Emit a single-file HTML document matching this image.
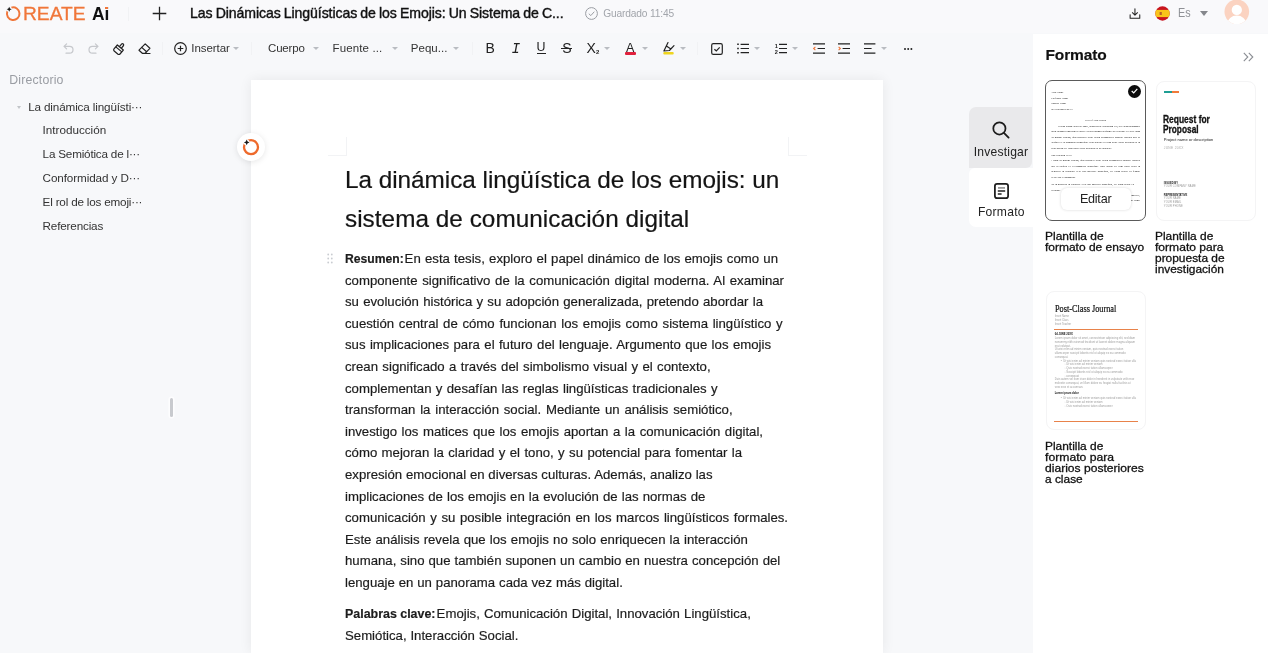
<!DOCTYPE html>
<html lang="es">
<head>
<meta charset="utf-8">
<title>Oreate AI</title>
<style>
*{box-sizing:border-box;margin:0;padding:0}
html,body{width:1268px;height:653px;overflow:hidden;background:#f7f8fa;will-change:transform;font-family:"Liberation Sans","Noto Sans CJK SC",sans-serif;color:#1a1a1a}
.abs{position:absolute}
.t{position:absolute;white-space:nowrap;line-height:1}
#page{position:absolute;left:251px;top:80px;width:632px;height:573px;background:#fff;box-shadow:0 0 12px rgba(0,0,0,.07)}
#right{position:absolute;left:1032.6px;top:34px;width:235.4px;height:619px;background:#fff}
.ln{position:absolute;left:345px;white-space:nowrap;font-size:13.2px;line-height:22px;height:22px;color:#1c1c1c;-webkit-text-stroke:.18px #1c1c1c}
.h1{position:absolute;left:345px;white-space:nowrap;font-size:24.3px;line-height:39px;height:39px;color:#141414;-webkit-text-stroke:.2px #141414}
.dir{position:absolute;white-space:nowrap;font-size:11.7px;line-height:16px;color:#333}
.tb{position:absolute;white-space:nowrap;font-size:11.5px;line-height:16px;color:#333;top:40px}
.cap{position:absolute;white-space:nowrap;font-size:10.8px;line-height:11px;color:#111;-webkit-text-stroke:.28px #111}
.j{text-align:justify;text-align-last:justify;height:22px;line-height:22px;overflow:hidden}
.thumb{position:absolute;left:0;top:0;width:400px;height:560px;transform:scale(.25);transform-origin:0 0}
svg{position:absolute;overflow:visible}
.ic{font-size:14px;top:40px;color:#222}
.car{position:absolute;width:0;height:0;border-left:3px solid transparent;border-right:3px solid transparent;border-top:3.1px solid #b9bcc1}
</style>
</head>
<body>
<!-- TOP BAR -->
<div id="topbar" class="abs" style="left:0;top:0;width:1268px;height:33px;background:#f9f9fb"></div>
<!-- logo -->
<svg style="left:0;top:0" width="28" height="28" viewBox="0 0 28 28"><path d="M11.4 7.65A6.3 6.3 0 1 1 7.3 11.5" fill="none" stroke="#f0763a" stroke-width="2" stroke-linecap="round"/><circle cx="9.2" cy="9.2" r="2.7" fill="#f7f8fa"/><path d="M9.2 6.7L10 8.4L11.7 9.2L10 10L9.2 11.7L8.4 10L6.7 9.2L8.4 8.4Z" fill="#1a1a1a"/></svg>
<div class="t" id="logo1" style="transform:scaleX(1.0311);transform-origin:0 0;left:23.2px;top:4.8px;font-size:18.6px;color:#f0763a;-webkit-text-stroke:.3px #f0763a">REATE</div>
<div class="t" id="logo2" style="transform:scaleX(0.9358);transform-origin:0 0;left:92px;top:4.8px;font-size:18.6px;color:#111;font-weight:bold">Ai</div>
<div class="abs" style="left:128px;top:7px;width:1px;height:14px;background:#f1f2f4"></div>
<div class="abs" id="idot" style="left:104.8px;top:6.7px;width:3px;height:2.5px;background:#f0763a"></div>
<svg style="left:152px;top:6px" width="15" height="15" viewBox="0 0 15 15"><path d="M7.5 0.7V14.3M0.7 7.5H14.3" stroke="#222" stroke-width="1.3" fill="none"/></svg>
<div class="t" id="doctitle" style="word-spacing:-0.617px;letter-spacing:-0.0926px;left:190px;top:5.9px;font-size:14.1px;color:#111;-webkit-text-stroke:.4px #111">Las Dinámicas Lingüísticas de los Emojis: Un Sistema de C...</div>
<svg style="left:585px;top:7px" width="13" height="13" viewBox="0 0 13 13"><circle cx="6.5" cy="6.5" r="5.9" fill="none" stroke="#9a9da3" stroke-width="1"/><path d="M3.8 6.7L5.8 8.6L9.3 4.7" fill="none" stroke="#9a9da3" stroke-width="1"/></svg>
<div class="t" id="saved" style="letter-spacing:-0.1445px;left:603.2px;top:8.5px;font-size:10.2px;color:#a2a5ab">Guardado 11:45</div>
<!-- download -->
<svg style="left:1128.7px;top:7.7px" width="11.9" height="11.4" viewBox="0 0 13 13"><path d="M6.5 0.8V8M3.6 5.4L6.5 8.2L9.4 5.4M1 7.6V11.6H12V7.6" fill="none" stroke="#222" stroke-width="1.2" stroke-linejoin="round" stroke-linecap="round"/></svg>
<!-- flag -->
<svg style="left:1155px;top:6px" width="15" height="15" viewBox="0 0 15 15"><defs><clipPath id="fc"><circle cx="7.5" cy="7.5" r="7.2"/></clipPath></defs><g clip-path="url(#fc)"><rect width="15" height="15" fill="#c8141e"/><rect y="3.9" width="15" height="7.2" fill="#f9c41a"/><rect x="4.6" y="6" width="2.2" height="3" fill="#b8602a"/></g></svg>
<div class="t" id="es" style="transform:scaleX(0.8570);transform-origin:0 0;left:1177.5px;top:7px;font-size:12.6px;color:#8f9196">Es</div>
<div class="abs" style="left:1199.8px;top:10.9px;width:0;height:0;border-left:4.6px solid transparent;border-right:4.6px solid transparent;border-top:5.4px solid #85878c"></div>
<!-- avatar -->
<svg style="left:1223.7px;top:-0.7px" width="25.6" height="25.6" viewBox="0 0 27 27"><defs><clipPath id="ac"><circle cx="13.5" cy="13.5" r="13"/></clipPath></defs><circle cx="13.5" cy="13.5" r="13" fill="#fbd3c1"/><g clip-path="url(#ac)"><circle cx="13.5" cy="11.5" r="5.4" fill="#fff"/><ellipse cx="13.5" cy="26" rx="10" ry="8.5" fill="#fff"/></g></svg>

<!-- TOOLBAR -->
<div id="toolbar">
<svg style="left:62.5px;top:43px" width="11" height="11" viewBox="0 0 11 11"><path d="M3.6 0.9L1 3.4L3.6 5.9M1.2 3.4H6.6A3.4 3.4 0 0 1 6.6 10.2H3" fill="none" stroke="#c6c8cc" stroke-width="1.2" stroke-linecap="round" stroke-linejoin="round"/></svg>
<svg style="left:87.5px;top:43px" width="11" height="11" viewBox="0 0 11 11"><path d="M7.4 0.9L10 3.4L7.4 5.9M9.8 3.4H4.4A3.4 3.4 0 0 0 4.4 10.2H8" fill="none" stroke="#c6c8cc" stroke-width="1.2" stroke-linecap="round" stroke-linejoin="round"/></svg>
<svg style="left:112.5px;top:42px" width="13" height="13" viewBox="0 0 13 13"><g transform="rotate(40 6.5 6.5)" fill="none" stroke="#222" stroke-width="1.2" stroke-linejoin="round"><path d="M2.6 5.2H10.4V10.4A1.4 1.4 0 0 1 9 11.8H4A1.4 1.4 0 0 1 2.6 10.4Z"/><path d="M2.6 7.6H10.4"/><path d="M5.3 5.2V1.9A1.2 1.2 0 0 1 7.7 1.9V5.2"/></g></svg>
<svg style="left:138px;top:43px" width="13" height="12" viewBox="0 0 13 12"><path d="M7.2 0.9L11.9 5.3L7 10.3H4.3L1 7.2Z" fill="none" stroke="#222" stroke-width="1.2" stroke-linejoin="round"/><path d="M3.7 4.4L8.6 8.8M6.5 10.5H12" fill="none" stroke="#222" stroke-width="1.2" stroke-linecap="round"/></svg>
<div class="abs" style="left:162px;top:42px;width:1px;height:13px;background:#f1f2f4"></div>
<svg style="left:173.6px;top:42px" width="13" height="13" viewBox="0 0 13 13"><circle cx="6.5" cy="6.5" r="5.8" fill="none" stroke="#222" stroke-width="1.2"/><path d="M6.5 3.7V9.3M3.7 6.5H9.3" stroke="#222" stroke-width="1.2" fill="none"/></svg>
<div class="tb" id="tInsertar" style="letter-spacing:-0.0710px;left:191.3px">Insertar</div>
<div class="car" style="left:233.2px;top:47.2px"></div>
<div class="abs" style="left:251px;top:42px;width:1px;height:13px;background:#f1f2f4"></div>
<div class="tb" id="tCuerpo" style="letter-spacing:-0.1638px;left:268px">Cuerpo</div>
<div class="car" style="left:312.5px;top:47.2px"></div>
<div class="tb" id="tFuente" style="letter-spacing:0.1236px;left:332.6px">Fuente ...</div>
<div class="car" style="left:391.6px;top:47.2px"></div>
<div class="tb" id="tPequ" style="letter-spacing:0.0250px;left:410.8px">Pequ...</div>
<div class="car" style="left:453.4px;top:47.2px"></div>
<div class="abs" style="left:472px;top:42px;width:1px;height:13px;background:#f1f2f4"></div>
<div class="tb ic" id="iB" style="left:485.5px">B</div>
<div class="tb ic" id="iI" style="left:511.6px;top:41.4px;font-size:14.5px;font-style:italic;font-family:'Liberation Mono',monospace">I</div>
<div class="tb ic" id="iU" style="left:536.6px;font-size:12.4px;top:39.3px">U</div>
<div class="abs" style="left:536.6px;top:53.1px;width:9.6px;height:1.1px;background:#222"></div>
<div class="tb ic" id="iS" style="left:562.2px">S</div>
<div class="abs" style="left:561.4px;top:47.7px;width:11px;height:1.1px;background:#222"></div>
<div class="tb ic" id="iX" style="left:586.6px">X<span style="font-size:6px;font-weight:bold;vertical-align:-1px">2</span></div>
<div class="car" style="left:603.7px;top:47.2px"></div>
<div class="tb ic" id="iA" style="left:626px;font-size:12.5px;top:39.5px">A</div>
<div class="abs" style="left:625px;top:52px;width:11.4px;height:2.6px;background:#e0203c;border-radius:1px"></div>
<div class="car" style="left:641.5px;top:47.2px"></div>
<svg style="left:662px;top:41px" width="13" height="14" viewBox="0 0 13 14"><path d="M6 1.6L1.9 10L7.4 9.5L12 4.6M4.4 4.9L8.9 8" fill="none" stroke="#222" stroke-width="1.2" stroke-linejoin="round" stroke-linecap="round"/><rect x="1.3" y="11.1" width="10.4" height="2.4" rx="1" fill="#efd51f"/></svg>
<div class="car" style="left:680.3px;top:47.2px"></div>
<div class="abs" style="left:697px;top:42px;width:1px;height:13px;background:#f1f2f4"></div>
<svg style="left:711px;top:42.5px" width="12" height="12" viewBox="0 0 12 12"><rect x="0.7" y="0.7" width="10.6" height="10.6" rx="1.6" fill="none" stroke="#222" stroke-width="1.2"/><path d="M3.4 6.2L5.3 8L8.7 4.3" fill="none" stroke="#222" stroke-width="1.2"/></svg>
<svg style="left:736.5px;top:43px" width="12" height="11" viewBox="0 0 12 11"><path d="M3.6 1.3H12M3.6 5.5H12M3.6 9.7H12" stroke="#222" stroke-width="1.2" fill="none"/><path d="M0.2 1.3H1.8M0.2 5.5H1.8M0.2 9.7H1.8" stroke="#222" stroke-width="1.5" fill="none"/></svg>
<div class="car" style="left:753.9px;top:47.2px"></div>
<svg style="left:775px;top:43px" width="12" height="11" viewBox="0 0 12 11"><path d="M4 1.3H12M4 5.5H12M4 9.7H12" stroke="#222" stroke-width="1.2" fill="none"/><text x="-0.3" y="4.6" font-size="5.6" font-weight="bold" font-family="Liberation Sans, sans-serif" fill="#222">1</text><text x="-0.3" y="10.8" font-size="5.6" font-weight="bold" font-family="Liberation Sans, sans-serif" fill="#222">2</text></svg>
<div class="car" style="left:791.7px;top:47.2px"></div>
<svg style="left:813px;top:43px" width="12" height="11" viewBox="0 0 12 11"><path d="M0 0.8H12M4.6 5.5H12M0 10.2H12" stroke="#222" stroke-width="1.2" fill="none"/><path d="M2.4 3.8L0.6 5.5L2.4 7.2" stroke="#f0763a" stroke-width="1.1" fill="none"/></svg>
<svg style="left:838px;top:43px" width="12" height="11" viewBox="0 0 12 11"><path d="M0 0.8H12M4.6 5.5H12M0 10.2H12" stroke="#222" stroke-width="1.2" fill="none"/><path d="M0.6 3.8L2.4 5.5L0.6 7.2" stroke="#f0763a" stroke-width="1.1" fill="none"/></svg>
<svg style="left:864px;top:43px" width="12" height="11" viewBox="0 0 12 11"><path d="M0 0.8H11.4M0 5.5H7.6M0 10.2H11.4" stroke="#222" stroke-width="1.2" fill="none"/></svg>
<div class="car" style="left:881px;top:47.2px"></div>
<div class="abs" style="left:903.6px;top:47.5px;width:2.2px;height:2.2px;border-radius:1.1px;background:#222;box-shadow:3.2px 0 0 #222,6.4px 0 0 #222"></div>
</div>

<!-- LEFT DIRECTORY -->
<div id="leftdir">
<div class="dir" id="dTitle" style="letter-spacing:0.1642px;left:9.3px;top:71.5px;color:#9a9da3;font-size:12.3px">Directorio</div>
<div class="car" style="left:16.6px;top:106px;border-top-color:#c2c5c9;border-left-width:2.5px;border-right-width:2.5px;border-top-width:3px"></div>
<div class="dir" id="d0" style="letter-spacing:-0.1420px;left:28.2px;top:98.5px">La dinámica lingüísti···</div>
<div class="dir" id="d1" style="letter-spacing:-0.0060px;left:42.6px;top:122.3px">Introducción</div>
<div class="dir" id="d2" style="letter-spacing:-0.1967px;left:42.6px;top:146.1px">La Semiótica de l···</div>
<div class="dir" id="d3" style="letter-spacing:-0.1040px;left:42.6px;top:169.9px">Conformidad y D···</div>
<div class="dir" id="d4" style="letter-spacing:-0.1912px;left:42.6px;top:193.7px">El rol de los emoji···</div>
<div class="dir" id="d5" style="letter-spacing:-0.1669px;left:42.6px;top:217.5px">Referencias</div>
<div class="abs" style="left:169.6px;top:397.6px;width:3px;height:19.4px;border-radius:1.5px;background:#c8cace;box-shadow:0 0 0 1.5px rgba(255,255,255,.75)"></div>
</div>

<!-- PAGE -->
<div id="page"></div>
<div id="doc">
<div class="abs" style="left:328px;top:137px;width:19px;height:18.5px;border-right:1px solid #f2f3f5;border-bottom:1px solid #f2f3f5"></div>
<div class="abs" style="left:788px;top:137px;width:19px;height:18.5px;border-left:1px solid #f2f3f5;border-bottom:1px solid #f2f3f5"></div>
<div class="h1" id="h1a" style="letter-spacing:-0.0148px;top:160px">La dinámica lingüística de los emojis: un</div>
<div class="h1" id="h1b" style="letter-spacing:0.0390px;top:199px">sistema de comunicación digital</div>
<div class="ln" id="l0b" style="transform:scaleX(0.9221);transform-origin:0 0;top:248.05px;font-weight:bold">Resumen:</div><div class="ln" id="l0" style="word-spacing:0.560px;left:404.6px;top:248.05px">En esta tesis, exploro el papel dinámico de los emojis como un</div>
<div class="ln" id="l1" style="word-spacing:0.996px;top:269.64px">componente significativo de la comunicación digital moderna. Al examinar</div>
<div class="ln" id="l2" style="word-spacing:0.583px;top:291.23px">su evolución histórica y su adopción generalizada, pretendo abordar la</div>
<div class="ln" id="l3" style="word-spacing:1.026px;top:312.82px">cuestión central de cómo funcionan los emojis como sistema lingüístico y</div>
<div class="ln" id="l4" style="word-spacing:0.742px;top:334.41px">sus implicaciones para el futuro del lenguaje. Argumento que los emojis</div>
<div class="ln" id="l5" style="word-spacing:0.714px;top:356.00px">crean significado a través del simbolismo visual y el contexto,</div>
<div class="ln" id="l6" style="word-spacing:0.645px;top:377.59px">complementan y desafían las reglas lingüísticas tradicionales y</div>
<div class="ln" id="l7" style="word-spacing:1.128px;top:399.18px">transforman la interacción social. Mediante un análisis semiótico,</div>
<div class="ln" id="l8" style="word-spacing:0.897px;top:420.77px">investigo los matices que los emojis aportan a la comunicación digital,</div>
<div class="ln" id="l9" style="word-spacing:0.707px;top:442.36px">cómo mejoran la claridad y el tono, y su potencial para fomentar la</div>
<div class="ln" id="l10" style="word-spacing:0.141px;top:463.95px">expresión emocional en diversas culturas. Además, analizo las</div>
<div class="ln" id="l11" style="word-spacing:0.415px;top:485.54px">implicaciones de los emojis en la evolución de las normas de</div>
<div class="ln" id="l12" style="word-spacing:0.925px;top:507.13px">comunicación y su posible integración en los marcos lingüísticos formales.</div>
<div class="ln" id="l13" style="word-spacing:0.475px;top:528.72px">Este análisis revela que los emojis no solo enriquecen la interacción</div>
<div class="ln" id="l14" style="word-spacing:0.347px;top:550.31px">humana, sino que también suponen un cambio en nuestra concepción del</div>
<div class="ln" id="l15" style="word-spacing:0.201px;top:571.90px">lenguaje en un panorama cada vez más digital.</div>
<div class="ln" id="k0b" style="transform:scaleX(0.9422);transform-origin:0 0;top:602.95px;font-weight:bold">Palabras clave:</div><div class="ln" id="k0" style="word-spacing:0.485px;left:436.6px;top:602.95px">Emojis, Comunicación Digital, Innovación Lingüística,</div>
<div class="ln" id="k1" style="word-spacing:0.208px;top:624.55px">Semiótica, Interacción Social.</div>
<svg style="left:327px;top:253px" width="6" height="11" viewBox="0 0 6 11"><g fill="#c9ccd1"><circle cx="1.2" cy="1.5" r="0.9"/><circle cx="4.8" cy="1.5" r="0.9"/><circle cx="1.2" cy="5.5" r="0.9"/><circle cx="4.8" cy="5.5" r="0.9"/><circle cx="1.2" cy="9.5" r="0.9"/><circle cx="4.8" cy="9.5" r="0.9"/></g></svg>
<div class="abs" style="left:236.8px;top:132.8px;width:28px;height:28px;border-radius:50%;background:#fff;box-shadow:0 1px 6px rgba(0,0,0,.10)"></div>
<svg style="left:241px;top:137px" width="20" height="20" viewBox="0 0 20 20"><circle cx="10" cy="10.2" r="7" fill="none" stroke="#ee6a2c" stroke-width="2.3"/><circle cx="5.7" cy="5.4" r="2.9" fill="#fff"/><path d="M5.7 2.6L6.6 4.5L8.5 5.4L6.6 6.3L5.7 8.2L4.8 6.3L2.9 5.4L4.8 4.5Z" fill="#1a1a1a"/></svg>
</div>

<!-- SIDE TABS -->
<div id="tabs">
<div class="abs" style="left:969px;top:107px;width:62.7px;height:61.4px;background:#e9e9eb;border-radius:7px 0 6px 0"></div>
<div class="abs" style="left:969.3px;top:168px;width:63.3px;height:59.4px;background:#fff;border-radius:6px 0 0 7px"></div>
<svg style="left:991.8px;top:121.1px" width="18" height="18" viewBox="0 0 18 18"><circle cx="7.4" cy="7.4" r="6.1" fill="none" stroke="#1c1c1c" stroke-width="1.75"/><path d="M11.9 11.9L16.6 16.6" stroke="#1c1c1c" stroke-width="1.8" stroke-linecap="round"/></svg>
<div class="t" id="tabInv" style="letter-spacing:0.2194px;left:973.7px;top:146.2px;font-size:12.1px;color:#222">Investigar</div>
<svg style="left:993.5px;top:182.5px" width="15" height="16" viewBox="0 0 15 16"><rect x="0.9" y="0.9" width="13.2" height="14.2" rx="2.2" fill="none" stroke="#1c1c1c" stroke-width="1.75"/><path d="M4 4.9H11" stroke="#9a9a9a" stroke-width="1.8" fill="none"/><path d="M3.8 8H11.2M3.8 11H7.6" stroke="#222" stroke-width="1.4" fill="none"/></svg>
<div class="t" id="tabFmt" style="letter-spacing:0.2797px;left:977.9px;top:206.3px;font-size:12.1px;color:#222">Formato</div>
</div>

<!-- RIGHT PANEL -->
<div id="right"></div>
<div id="rightc">
<div class="t" id="fmtH" style="letter-spacing:-0.1333px;left:1045.5px;top:46.8px;font-size:15.5px;font-weight:bold;color:#111;-webkit-text-stroke:.15px #111">Formato</div>
<svg style="left:1242.9px;top:52px" width="11" height="10" viewBox="0 0 11 10"><path d="M0.8 0.8L4.8 5L0.8 9.2M5.8 0.8L9.8 5L5.8 9.2" fill="none" stroke="#8a8d93" stroke-width="1.1"/></svg>

<!-- card 1 -->
<div class="abs" style="left:1045px;top:80px;width:101px;height:141px;border:1px solid #5a5a5a;border-radius:7px;background:#fff;overflow:hidden">
<div class="thumb" id="th1" style="font-family:'Liberation Serif',serif;font-size:10.6px;line-height:22px;color:#000">
<div style="position:absolute;left:21px;top:33.8px;width:355px">Your Name<br>Professor Name<br>Subject Name<br>06 September 20XX</div>
<div style="position:absolute;left:21px;top:146.2px;width:355px;text-align:center">Title of Your Report</div>
<div style="position:absolute;left:21px;top:168.2px;width:355px;line-height:22px"><div class="j" style="padding-left:27px">Lorem ipsum dolor sit amet, consectetur adipiscing elit, sed diam nonummy</div><div class="j" style="">nibh euismod tincidunt ut laoreet dolore magna aliquam erat volutpat. Ut wisi enim</div><div class="j" style="">ad minim veniam, quis nostrud exerci tation ullamcorper suscipit lobortis nisl ut</div><div class="j" style="">aliquip ex ea commodo consequat. Duis autem vel eum iriure dolor in hendrerit in</div><div>Duis autem vel eum iriure dolor in hendrerit in vulputate.</div></div>
<div style="position:absolute;left:21px;top:285px;width:355px">Sub Heading Level</div>
<div style="position:absolute;left:21px;top:306.6px;width:355px;line-height:22px"><div class="j" style="">i enim ad minim veniam, quis nostrud exerci tation ullamcorper suscipit lobortis</div><div class="j" style="">nisl ut aliquip ex ea commodo consequat. Duis autem vel eum iriure dolor in</div><div class="j" style="">hendrerit in vulputate velit esse molestie consequat, vel illum dolore eu feugiat</div><div>vero eros et accumsan.</div></div>
<div style="position:absolute;left:21px;top:403px;width:355px;line-height:22px"><div class="j" style="padding-right:24px">lor in hendrerit in vulputate velit esse molestie consequat, vel illum dolore eu</div><div>volutpat.</div></div>
<div style="position:absolute;left:21px;top:447.4px;width:355px;line-height:20.8px;text-align:right">Sincerely,<br>Your Name</div>
</div>
</div>
<div class="abs" style="left:1127.6px;top:84.6px;width:13px;height:13px;border-radius:50%;background:#0c0c0c"></div>
<svg style="left:1130.6px;top:88.2px" width="7" height="6" viewBox="0 0 7 6"><path d="M0.7 3L2.7 4.9L6.3 0.9" fill="none" stroke="#fff" stroke-width="1.2"/></svg>
<div class="abs" style="left:1060.5px;top:188px;width:70px;height:22.4px;border-radius:6px;background:#fff;box-shadow:0 0 3px rgba(0,0,0,.16)"></div>
<div class="t" id="editar" style="letter-spacing:-0.2394px;left:1079.9px;top:192.5px;font-size:12.6px;color:#222">Editar</div>

<!-- card 2 -->
<div class="abs" style="left:1155.5px;top:80.5px;width:100.5px;height:140.5px;border:1px solid #f4f4f5;border-radius:8px;background:#fff;overflow:hidden">
<div class="abs" style="left:7.1px;top:9px;width:8px;height:2.8px;background:#1f9e94"></div>
<div class="abs" style="left:15.1px;top:9px;width:7px;height:2.8px;background:#f07a3a"></div>
<div class="t" id="rfp1" style="transform:scaleX(0.8285);transform-origin:0 0;left:6.8px;top:33.1px;font-size:10.2px;font-weight:bold;color:#111;-webkit-text-stroke:.3px #111">Request for</div>
<div class="t" id="rfp2" style="transform:scaleX(0.8167);transform-origin:0 0;left:6.8px;top:43px;font-size:10.2px;font-weight:bold;color:#111;-webkit-text-stroke:.3px #111">Proposal</div>
<div class="thumb" id="th2" style="font-size:18px;line-height:20px;color:#333">
<div style="position:absolute;left:27px;top:221.2px;white-space:nowrap;font-size:16.3px;color:#222">Project name or description</div>
<div style="position:absolute;left:27px;top:254.4px;white-space:nowrap;color:#aaa;letter-spacing:1.2px;font-size:13px">JUNE 20XX</div>
<div style="position:absolute;left:27px;top:392px;white-space:nowrap;font-weight:bold;font-size:10.5px;color:#222">ISSUED BY</div>
<div style="position:absolute;left:27px;top:406.8px;white-space:nowrap;font-size:10.5px;color:#999;letter-spacing:.6px">YOUR COMPANY NAME</div>
<div style="position:absolute;left:27px;top:441.6px;white-space:nowrap;font-weight:bold;font-size:10.5px;color:#222">REPRESENTATIVE</div>
<div style="position:absolute;left:27px;top:458.3px;white-space:nowrap;font-size:10.5px;line-height:14.6px;color:#999;letter-spacing:.6px">YOUR NAME<br>YOUR EMAIL<br>YOUR PHONE</div>
</div>
</div>

<div class="cap" id="c1a" style="transform:scaleX(1.1095);transform-origin:0 0;left:1045.2px;top:230.5px">Plantilla de</div>
<div class="cap" id="c1b" style="transform:scaleX(1.1093);transform-origin:0 0;left:1045.2px;top:241.5px">formato de ensayo</div>
<div class="cap" id="c2a" style="transform:scaleX(1.1037);transform-origin:0 0;left:1155.1px;top:230.5px">Plantilla de</div>
<div class="cap" id="c2b" style="transform:scaleX(1.1190);transform-origin:0 0;left:1155.1px;top:241.5px">formato para</div>
<div class="cap" id="c2c" style="transform:scaleX(1.1043);transform-origin:0 0;left:1155.1px;top:252.5px">propuesta de</div>
<div class="cap" id="c2d" style="transform:scaleX(1.1039);transform-origin:0 0;left:1155.1px;top:263.5px">investigación</div>

<!-- card 3 -->
<div class="abs" style="left:1045.5px;top:291px;width:100.5px;height:139px;border:1px solid #f4f4f5;border-radius:8px;background:#fff;overflow:hidden">
<div class="t" id="pcj" style="transform:scaleX(0.8613);transform-origin:0 0;left:8px;top:12.2px;font-size:9.6px;font-family:'Liberation Serif',serif;color:#111;-webkit-text-stroke:.2px #111">Post-Class Journal</div>
<div class="abs" style="left:7.7px;top:36.7px;width:83.4px;height:.9px;background:#e8824a"></div>
<div class="abs" style="left:7.7px;top:129px;width:83.4px;height:.9px;background:#e8824a"></div>
<div class="thumb" id="th3" style="font-size:11px;line-height:14.9px;color:#a0a0a0">
<div style="position:absolute;left:31px;top:88.4px;width:330px;font-size:10.4px;line-height:15.2px;color:#9a9a9a">Insert Name<br>Insert Class<br>Insert Teacher</div>
<div style="position:absolute;left:31px;top:161px;width:334px;font-weight:bold;color:#111;font-size:10.6px">04 JUNE 20XX</div>
<div style="position:absolute;left:31px;top:177.6px;width:326px">Lorem ipsum dolor sit amet, consectetuer adipiscing elit, sed diam nonummy nibh euismod tincidunt ut laoreet dolore magna aliquam erat volutpat.</div>
<div style="position:absolute;left:31px;top:222.4px;width:326px">Ut wisi enim ad minim veniam, quis nostrud exerci tation ullamcorper suscipit lobortis nisl ut aliquip ex ea commodo consequat.</div>
<div style="position:absolute;left:55px;top:267.6px;width:320px;white-space:nowrap">•&nbsp; Ut wisi enim ad minim veniam quis nostrud exerci tation ulla</div>
<div style="position:absolute;left:70px;top:282.4px;width:300px;white-space:nowrap">◦ Ut wisi enim ad minim veniam<br>◦ Quis nostrud exerci tation ullamcorper<br>◦ Suscipit lobortis nisl ut aliquip ex ea commodo<br>◦ consequat</div>
<div style="position:absolute;left:31px;top:342px;width:326px">Duis autem vel eum iriure dolor in hendrerit in vulputate velit esse molestie consequat, vel illum dolore eu feugiat nulla facilisis at vero eros et accumsan.</div>
<div style="position:absolute;left:31px;top:398.2px;width:334px;font-weight:bold;color:#111;font-size:10.6px">Lorem ipsum dolor</div>
<div style="position:absolute;left:55px;top:417.2px;width:320px;white-space:nowrap">•&nbsp; Ut wisi enim ad minim veniam quis nostrud exerci tation ulla</div>
<div style="position:absolute;left:70px;top:432px;width:300px;white-space:nowrap">◦ Ut wisi enim ad minim veniam<br>◦ Quis nostrud exerci tation ullamcorper</div>
</div>
</div>
<div class="cap" id="c3a" style="transform:scaleX(1.1038);transform-origin:0 0;left:1045.2px;top:440.5px">Plantilla de</div>
<div class="cap" id="c3b" style="transform:scaleX(1.1289);transform-origin:0 0;left:1045.2px;top:451.6px">formato para</div>
<div class="cap" id="c3c" style="transform:scaleX(1.1201);transform-origin:0 0;left:1045.2px;top:462.7px">diarios posteriores</div>
<div class="cap" id="c3d" style="transform:scaleX(1.1021);transform-origin:0 0;left:1045.2px;top:473.8px">a clase</div>
</div>
</body>
</html>
